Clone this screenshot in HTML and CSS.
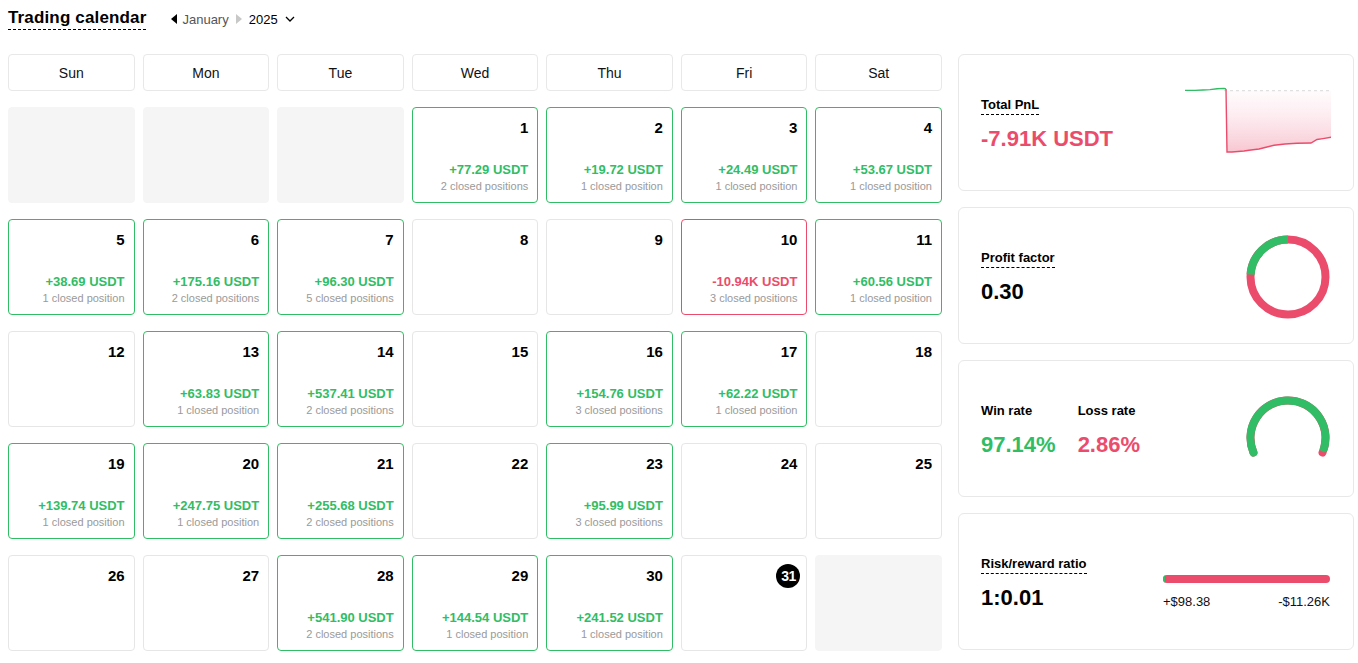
FILE: index.html
```html
<!DOCTYPE html>
<html lang="en">
<head>
<meta charset="utf-8">
<title>Trading calendar</title>
<link rel="stylesheet" href="styles.css">
</head>
<body>
<div class="page">
  <header class="topbar">
    <h1 class="title">Trading calendar</h1>
    <div class="period">
      <svg class="tri" width="6" height="10" viewBox="0 0 6 10"><path d="M6 0 L0 5 L6 10 Z" fill="#000"/></svg>
      <span class="month">January</span>
      <svg class="tri tri-next" width="6" height="10" viewBox="0 0 6 10"><path d="M0 0 L6 5 L0 10 Z" fill="#c8c8c8"/></svg>
      <span class="year">2025</span>
      <svg class="chev" width="10" height="6" viewBox="0 0 10 6"><path d="M1 1 L5 5 L9 1" fill="none" stroke="#000" stroke-width="1.3"/></svg>
    </div>
  </header>

  <main class="layout">
    <section class="calendar">
      <div class="dow">Sun</div>
      <div class="dow">Mon</div>
      <div class="dow">Tue</div>
      <div class="dow">Wed</div>
      <div class="dow">Thu</div>
      <div class="dow">Fri</div>
      <div class="dow">Sat</div>

      <div class="day blank"></div>
      <div class="day blank"></div>
      <div class="day blank"></div>
      <div class="day win"><span class="num">1</span><div class="stats"><span class="pnl">+77.29 USDT</span><span class="pos">2 closed positions</span></div></div>
      <div class="day win"><span class="num">2</span><div class="stats"><span class="pnl">+19.72 USDT</span><span class="pos">1 closed position</span></div></div>
      <div class="day win"><span class="num">3</span><div class="stats"><span class="pnl">+24.49 USDT</span><span class="pos">1 closed position</span></div></div>
      <div class="day win"><span class="num">4</span><div class="stats"><span class="pnl">+53.67 USDT</span><span class="pos">1 closed position</span></div></div>

      <div class="day win"><span class="num">5</span><div class="stats"><span class="pnl">+38.69 USDT</span><span class="pos">1 closed position</span></div></div>
      <div class="day win"><span class="num">6</span><div class="stats"><span class="pnl">+175.16 USDT</span><span class="pos">2 closed positions</span></div></div>
      <div class="day win"><span class="num">7</span><div class="stats"><span class="pnl">+96.30 USDT</span><span class="pos">5 closed positions</span></div></div>
      <div class="day"><span class="num">8</span></div>
      <div class="day"><span class="num">9</span></div>
      <div class="day loss"><span class="num">10</span><div class="stats"><span class="pnl">-10.94K USDT</span><span class="pos">3 closed positions</span></div></div>
      <div class="day win"><span class="num">11</span><div class="stats"><span class="pnl">+60.56 USDT</span><span class="pos">1 closed position</span></div></div>

      <div class="day"><span class="num">12</span></div>
      <div class="day win"><span class="num">13</span><div class="stats"><span class="pnl">+63.83 USDT</span><span class="pos">1 closed position</span></div></div>
      <div class="day win"><span class="num">14</span><div class="stats"><span class="pnl">+537.41 USDT</span><span class="pos">2 closed positions</span></div></div>
      <div class="day"><span class="num">15</span></div>
      <div class="day win"><span class="num">16</span><div class="stats"><span class="pnl">+154.76 USDT</span><span class="pos">3 closed positions</span></div></div>
      <div class="day win"><span class="num">17</span><div class="stats"><span class="pnl">+62.22 USDT</span><span class="pos">1 closed position</span></div></div>
      <div class="day"><span class="num">18</span></div>

      <div class="day win"><span class="num">19</span><div class="stats"><span class="pnl">+139.74 USDT</span><span class="pos">1 closed position</span></div></div>
      <div class="day win"><span class="num">20</span><div class="stats"><span class="pnl">+247.75 USDT</span><span class="pos">1 closed position</span></div></div>
      <div class="day win"><span class="num">21</span><div class="stats"><span class="pnl">+255.68 USDT</span><span class="pos">2 closed positions</span></div></div>
      <div class="day"><span class="num">22</span></div>
      <div class="day win"><span class="num">23</span><div class="stats"><span class="pnl">+95.99 USDT</span><span class="pos">3 closed positions</span></div></div>
      <div class="day"><span class="num">24</span></div>
      <div class="day"><span class="num">25</span></div>

      <div class="day"><span class="num">26</span></div>
      <div class="day"><span class="num">27</span></div>
      <div class="day win"><span class="num">28</span><div class="stats"><span class="pnl">+541.90 USDT</span><span class="pos">2 closed positions</span></div></div>
      <div class="day win"><span class="num">29</span><div class="stats"><span class="pnl">+144.54 USDT</span><span class="pos">1 closed position</span></div></div>
      <div class="day win"><span class="num">30</span><div class="stats"><span class="pnl">+241.52 USDT</span><span class="pos">1 closed position</span></div></div>
      <div class="day"><span class="num today">31</span></div>
      <div class="day blank"></div>
    </section>

    <aside class="summary">
      <div class="card">
        <div class="metric">
          <span class="label">Total PnL</span>
          <span class="value red">-7.91K USDT</span>
        </div>
        <svg class="spark" width="146" height="70" viewBox="0 0 146 70">
          <defs>
            <linearGradient id="pnlfill" x1="0" y1="0" x2="0" y2="1">
              <stop offset="0" stop-color="#fde9ee" stop-opacity="0.2"/>
              <stop offset="1" stop-color="#f8c6d1"/>
            </linearGradient>
          </defs>
          <path d="M41 4.7 L42 66 L47 66 L59 65 L64 64.2 L74 63 L80 61.5 L89 59.3 L100 58 L112 57.2 L126 57 L132 53.5 L138 52.6 L146 51.3 L146 4.7 Z" fill="url(#pnlfill)"/>
          <line x1="39" y1="4.7" x2="146" y2="4.7" stroke="#d9d9d9" stroke-width="1" stroke-dasharray="3 3"/>
          <path d="M0 4.4 L10 4.4 L18 4 L25 3.6 L32 2.8 L39 2.4 L41 3" fill="none" stroke="#31bd65" stroke-width="1.4"/>
          <path d="M41 3 L42 66 L47 66 L59 65 L64 64.2 L74 63 L80 61.5 L89 59.3 L100 58 L112 57.2 L126 57 L132 53.5 L138 52.6 L146 51.3" fill="none" stroke="#eb4c6c" stroke-width="1.4"/>
        </svg>
      </div>

      <div class="card">
        <div class="metric">
          <span class="label">Profit factor</span>
          <span class="value">0.30</span>
        </div>
        <svg class="donut" width="84" height="84" viewBox="0 0 84 84">
          <circle cx="42" cy="42" r="37.5" fill="none" stroke="#eb4c6c" stroke-width="8"/>
          <path d="M42 4.5 A37.5 37.5 0 0 0 4.6 39.5" fill="none" stroke="#31bd65" stroke-width="8"/>
        </svg>
      </div>

      <div class="card">
        <div class="rates">
          <div class="metric">
            <span class="label plain">Win rate</span>
            <span class="value green">97.14%</span>
          </div>
          <div class="metric">
            <span class="label plain">Loss rate</span>
            <span class="value red">2.86%</span>
          </div>
        </div>
        <svg class="gauge" width="84" height="62" viewBox="0 0 84 62">
          <path d="M7.43 56.53 A37.5 37.5 0 1 1 76.57 56.53" fill="none" stroke="#eb4c6c" stroke-width="8" stroke-linecap="round"/>
          <path d="M7.43 56.53 A37.5 37.5 0 1 1 78.08 52.21" fill="none" stroke="#31bd65" stroke-width="8" stroke-linecap="round"/>
        </svg>
      </div>

      <div class="card">
        <div class="metric">
          <span class="label">Risk/reward ratio</span>
          <span class="value">1:0.01</span>
        </div>
        <div class="ratio">
          <div class="bar"><span class="bar-win" style="width: 1%"></span></div>
          <div class="ratio-labels"><span>+$98.38</span><span>-$11.26K</span></div>
        </div>
      </div>
    </aside>
  </main>
</div>
</body>
</html>
```

FILE: styles.css
```css
* { box-sizing: border-box; }

body {
  margin: 0;
  background: #fff;
  color: #000;
  font-family: "Liberation Sans", Arial, sans-serif;
}

.page {
  padding: 8px 4px 0 8px;
}

.topbar {
  display: flex;
  align-items: center;
  height: 22px;
  margin-bottom: 24px;
}

.title {
  margin: 0;
  font-size: 17px;
  line-height: 20px;
  font-weight: 700;
  letter-spacing: 0.15px;
  border-bottom: 1px dashed #000;
  padding-bottom: 1px;
}

.period {
  display: flex;
  align-items: center;
  margin-left: 25px;
  font-size: 13px;
}

.tri { display: block; }
.month { color: #555; margin-left: 5px; }
.tri-next { margin-left: 7px; }
.year { margin-left: 7px; color: #000; }
.chev { margin-left: 7px; display: block; }

.layout {
  display: grid;
  grid-template-columns: 934px 396px;
  column-gap: 16px;
  align-items: start;
}

.calendar {
  display: grid;
  grid-template-columns: repeat(7, 1fr);
  grid-template-rows: 37px repeat(5, 96px);
  column-gap: 8px;
  row-gap: 16px;
}

.dow {
  border: 1px solid #e8e8e8;
  border-radius: 4px;
  display: flex;
  align-items: center;
  justify-content: center;
  font-size: 14px;
  color: #111;
}

.day {
  border: 1px solid #e6e6e6;
  border-radius: 4px;
  display: flex;
  flex-direction: column;
  align-items: flex-end;
  padding: 11px 9px 9px 9px;
}

.day.blank {
  background: #f5f5f5;
  border-color: #f5f5f5;
}

.day.win { border-color: #31bd65; }
.day.loss { border-color: #eb4c6c; }

.num {
  font-size: 15px;
  line-height: 18px;
  font-weight: 700;
}

.num.today {
  background: #000;
  color: #fff;
  width: 24px;
  height: 24px;
  line-height: 24px;
  border-radius: 50%;
  text-align: center;
  font-size: 14px;
  margin-top: -3px;
  margin-right: -3px;
  letter-spacing: -0.5px;
}

.stats {
  margin-top: auto;
  display: flex;
  flex-direction: column;
  align-items: flex-end;
  gap: 1px;
}

.pnl {
  font-size: 13px;
  line-height: 16px;
  font-weight: 700;
}

.win .pnl { color: #31bd65; }
.loss .pnl { color: #eb4c6c; }

.pos {
  font-size: 11px;
  line-height: 14px;
  color: #9a9a9a;
}

.summary {
  display: flex;
  flex-direction: column;
  gap: 16px;
}

.card {
  height: 137px;
  border: 1px solid #e8e8e8;
  border-radius: 6px;
  display: flex;
  align-items: center;
  justify-content: space-between;
  padding: 3px 22px 0 22px;
}

.metric {
  display: flex;
  flex-direction: column;
  align-items: flex-start;
}

.label {
  font-size: 13px;
  line-height: 16px;
  font-weight: 700;
  border-bottom: 1px dashed #000;
  padding-bottom: 1px;
}

.label.plain {
  border-bottom: 1px solid transparent;
}

.value {
  font-size: 22px;
  line-height: 26px;
  font-weight: 700;
  margin-top: 11px;
}

.value.red { color: #eb4c6c; }
.value.green { color: #31bd65; }

.rates {
  display: flex;
  gap: 22px;
}

.spark, .donut, .gauge { display: block; }
.spark { margin-top: -6px; }
.donut { margin-top: -1px; margin-right: 1px; }
.gauge { margin-right: 1px; margin-top: -7px; }

.ratio {
  width: 167px;
  margin-top: 18px;
  margin-right: 1px;
}

.bar {
  height: 8px;
  border-radius: 4px;
  background: #eb4c6c;
  overflow: hidden;
}

.bar-win {
  display: block;
  height: 100%;
  background: #31bd65;
  min-width: 2px;
}

.ratio-labels {
  display: flex;
  justify-content: space-between;
  margin-top: 11px;
  font-size: 13px;
  line-height: 16px;
  color: #111;
}
```
